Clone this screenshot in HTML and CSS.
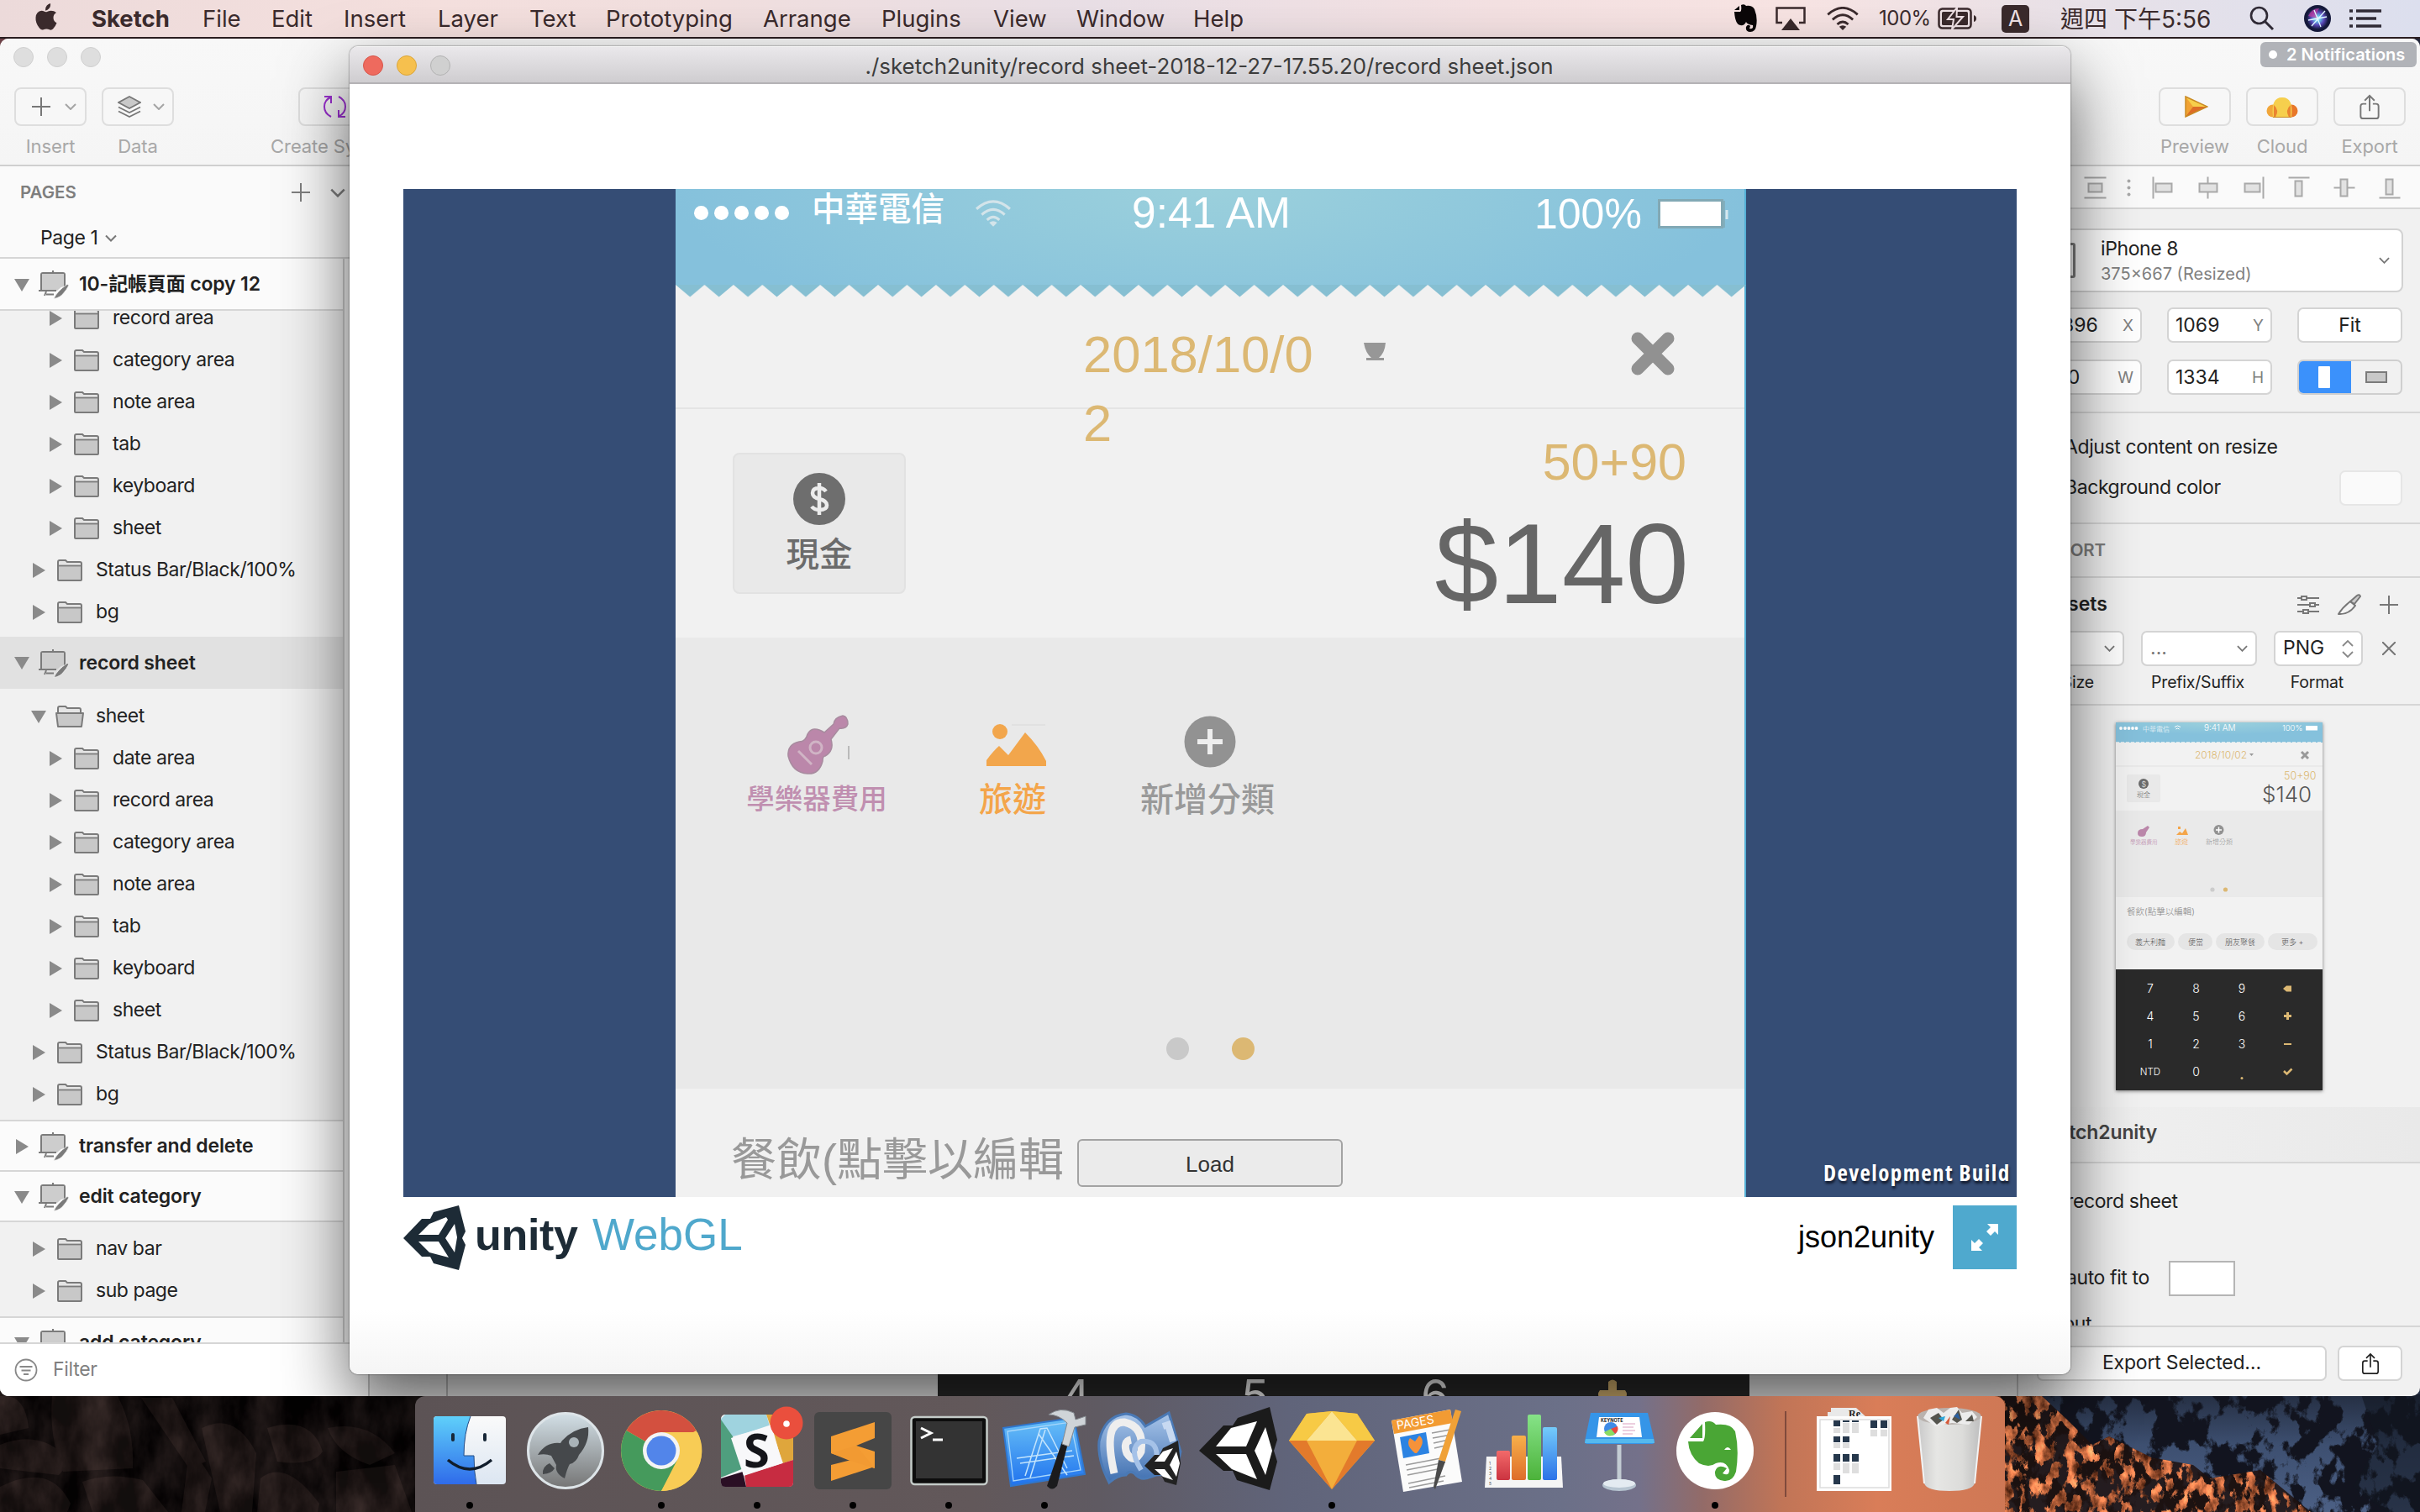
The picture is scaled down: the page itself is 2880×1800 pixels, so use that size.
FILE: index.html
```html
<!DOCTYPE html>
<html lang="zh-Hant">
<head>
<meta charset="utf-8">
<title>Sketch</title>
<link rel="stylesheet" href="styles.css">
</head>
<body>
<svg class="defs" width="0" height="0" aria-hidden="true">
  <defs>
    <symbol id="folder" viewBox="0 0 30 26"><path d="M1 24V3q0-2 2-2h7l2 2h15q2 0 2 2v19q0 1-1 1H2q-1 0-1-1z" fill="#e4e4e4" stroke="#7b7b7b" stroke-width="2"/><path d="M2 7.500H28V24H2z" fill="#c8c8c8"/><path d="M1 7.500H29" stroke="#7b7b7b" stroke-width="1.800"/></symbol>
    <symbol id="folder-open" viewBox="0 0 34 26"><path d="M3 10V3q0-2 2-2h7l2 2h14q2 0 2 2v5" fill="#e4e4e4" stroke="#7b7b7b" stroke-width="2"/><path d="M1 9H33L31 25H3z" fill="#c8c8c8" stroke="#7b7b7b" stroke-width="2" stroke-linejoin="round"/></symbol>
    <symbol id="artboard" viewBox="0 0 36 34"><path d="M17 0v3M3 24V5q0-2 2-2h24q2 0 2 2v14" fill="#cdcdcd" stroke="#7b7b7b" stroke-width="2"/><path d="M4 4H30V17L22 24H4z" fill="#cdcdcd"/><path d="M0 24H21M9 25l-2 5M9 28.500H18" stroke="#7b7b7b" stroke-width="2" fill="none"/><path d="M18 33.500q4-9 16-17l2 1q-3 6-6 9q-4 6-12 7z" fill="#7b7b7b" stroke="#f4f4f4" stroke-width=".8"/></symbol>
    <symbol id="right" viewBox="0 0 15 18"><path d="M0 0L15 9L0 18z" fill="#8a8a8a"/></symbol>
    <symbol id="down" viewBox="0 0 18 15"><path d="M0 0H18L9 15z" fill="#8a8a8a"/></symbol>
    <symbol id="chev" viewBox="0 0 14 8"><path d="M1 1L7 7L13 1" fill="none" stroke="currentColor" stroke-width="2"/></symbol>
    <symbol id="plus" viewBox="0 0 22 22"><path d="M11 0V22M0 11H22" stroke="currentColor" stroke-width="2"/></symbol>
    <symbol id="share" viewBox="0 0 24 32"><path d="M12 21V2M6 8L12 2L18 8M8 12H4q-3 0-3 3V27q0 3 3 3H20q3 0 3-3V15q0-3-3-3H16" fill="none" stroke="currentColor" stroke-width="2"/></symbol>
    <symbol id="wifi" viewBox="0 0 42 30"><g fill="none" stroke="currentColor" stroke-width="3"><path d="M2 10Q21-7 40 10"/><path d="M8 16.500Q21 4.500 34 16.500"/><path d="M14 22.500Q21 16 28 22.500"/></g><path d="M21 30l-4.500-4.500Q21 22 25.500 25.500z" fill="currentColor"/></symbol>
    <linearGradient id="gFinder" x2="0" y2="1"><stop stop-color="#5fd0fa"/><stop offset="1" stop-color="#2f6bea"/></linearGradient>
    <linearGradient id="gWhite" x2="0" y2="1"><stop stop-color="#fafafa"/><stop offset="1" stop-color="#dce6f2"/></linearGradient>
    <linearGradient id="gLaunch" x2="0" y2="1"><stop stop-color="#d3e0e7"/><stop offset="1" stop-color="#757575"/></linearGradient>
    <linearGradient id="gXcode" x2="0" y2="1"><stop stop-color="#69c1f7"/><stop offset="1" stop-color="#1f72ee"/></linearGradient>
    <linearGradient id="gMono" x2="0" y2="1"><stop stop-color="#a9c6ea"/><stop offset="1" stop-color="#3f6fb0"/></linearGradient>
    <linearGradient id="gTrash" x2="1" y2="0"><stop stop-color="#c9c9c9"/><stop offset=".3" stop-color="#e6e6e4"/><stop offset=".7" stop-color="#dcdcda"/><stop offset="1" stop-color="#bdbdbd"/></linearGradient>
    <linearGradient id="gRed" x2="0" y2="1"><stop stop-color="#f26a6a"/><stop offset="1" stop-color="#cb3340"/></linearGradient>
    <linearGradient id="gOrange" x2="0" y2="1"><stop stop-color="#f7b04a"/><stop offset="1" stop-color="#de6d2b"/></linearGradient>
    <linearGradient id="gGreen" x2="0" y2="1"><stop stop-color="#86e388"/><stop offset="1" stop-color="#4cb23a"/></linearGradient>
    <linearGradient id="gBlue" x2="0" y2="1"><stop stop-color="#74cbfa"/><stop offset="1" stop-color="#2b72e8"/></linearGradient>
    <radialGradient id="gSiri"><stop stop-color="#fff"/><stop offset=".25" stop-color="#68c9ea"/><stop offset=".6" stop-color="#5a48b8"/><stop offset="1" stop-color="#121a3a"/></radialGradient>
    <radialGradient id="gSky" cx=".5" cy="0" r=".6"><stop stop-color="#9bd0dc"/><stop offset="1" stop-color="#85c1dc"/></radialGradient>
    <pattern id="teeth" width="34.430" height="16" patternUnits="userSpaceOnUse"><path d="M0 0L17.200 14.500L34.430 0z" fill="#86bfd2"/></pattern>
    <filter id="rockDark" x="0" y="0" width="1" height="1" color-interpolation-filters="sRGB"><feTurbulence type="fractalNoise" baseFrequency=".03 .015" numOctaves="5" seed="4"/><feColorMatrix values=".5 0 0 0 -.15  .4 0 0 0 -.13  .38 0 0 0 -.12  0 0 0 0 1"/></filter>
    <filter id="cliff" x="0" y="0" width="1" height="1" color-interpolation-filters="sRGB"><feTurbulence type="fractalNoise" baseFrequency=".035 .025" numOctaves="6" seed="11"/><feColorMatrix values="0 0 0 0 .07  0 0 0 0 .08  0 0 0 0 .12  14 0 0 0 -6.400"/></filter>
    <filter id="glow" x="0" y="0" width="1" height="1" color-interpolation-filters="sRGB"><feTurbulence type="fractalNoise" baseFrequency=".08 .05" numOctaves="6" seed="23"/><feColorMatrix values="1.500 0 0 0 0  .9 0 0 0 -.05  .6 0 0 0 -.06  0 12 0 0 -5.800"/><feComposite in2="SourceGraphic" operator="in"/></filter>
    <linearGradient id="gSnow" x2="0" y2="1"><stop stop-color="#1d2434"/><stop offset=".5" stop-color="#3d4f70"/><stop offset="1" stop-color="#4c6085"/></linearGradient>
  </defs>
</svg>

<div class="desktop">
  <svg class="rocks" width="520" height="160" viewBox="0 0 520 160">
    <rect width="520" height="160" fill="#080606"/>
    <g fill="#261d1b"><path d="M0 22Q30 18 34 60L0 68z"/><path d="M62 22H140Q160 60 158 108L75 112Q58 70 62 22z"/><path d="M0 80Q50 60 84 100L70 116L0 108z"/><path d="M0 130Q60 100 84 150L80 160H0z"/><path d="M98 124Q130 112 170 122L200 160H110z"/><path d="M168 24H205L245 100L225 108z"/><path d="M226 80L252 120L244 160H216z"/><path d="M240 60Q280 40 305 90L300 160H262z"/><path d="M318 60Q370 44 384 88Q372 106 330 100z"/><path d="M310 120Q340 96 380 150L378 160H306z"/><path d="M390 60Q440 50 470 90L440 104Q400 90 390 60z"/><path d="M400 112L470 104L490 160H400z"/></g>
    <rect width="520" height="160" filter="url(#rockDark)" opacity=".5"/>
  </svg>
  <svg class="cliffs" width="520" height="160" viewBox="0 0 520 160">
    <rect width="520" height="160" fill="url(#gSnow)"/>
    <rect width="520" height="160" filter="url(#cliff)"/>
    <path d="M450 20L520 20V160H480L440 130L470 80z" fill="#11151f" opacity=".6"/>
    <path d="M0 20L70 22L100 50L130 80L150 70L200 95L250 104L270 120L330 110L390 160H0z" fill="#1f120f" opacity=".85"/>
    <path d="M0 20L70 22L100 50L130 80L150 70L200 95L250 104L270 120L330 110L390 160H0z" filter="url(#glow)"/>
  </svg>

  <header class="menubar">
    <svg class="apple" width="26" height="32" viewBox="0 0 26 32"><path d="M18 0q.5 4-2 6.500T12 8.500q-.5-3.500 1.800-6Q15.500.5 18 0zM25 11q-3.500 2.200-3.500 6 0 4.500 4 6.300Q24 27.500 21 30.500q-1.500 1.500-3.500 1Q15 30.500 13.300 30.500T9 31.500Q7 32 5 29.500 0 23.500 .5 17 1 9.500 7.500 8.800q1.500 0 3 .8t2.800.6Q16 9 18.500 8.800 22.500 8.800 25 11z" fill="#3a2a2c"/></svg>
    <nav class="menus">
      <b class="m m1">Sketch</b><span class="m m2">File</span><span class="m m3">Edit</span><span class="m m4">Insert</span><span class="m m5">Layer</span><span class="m m6">Text</span><span class="m m7">Prototyping</span><span class="m m8">Arrange</span><span class="m m9">Plugins</span><span class="m m10">View</span><span class="m m11">Window</span><span class="m m12">Help</span>
    </nav>
    <div class="status">
      <svg width="28" height="34" viewBox="0 0 28 34"><path d="M9 1Q13-1 15 2Q22 1 25 6Q29 16 27 26Q26 33 20 33Q14 33 15 27Q17 23 20 26L19 29Q24 30 23 25Q16 24 15 21Q13 26 8 25Q2 24 1 9H8Q10 8 9 1zM7 2V7H1z" fill="#0b0708"/></svg>
      <svg class="s2" width="36" height="28" viewBox="0 0 36 28"><path d="M8 19H1.500V1.500H34.500V19H28" fill="none" stroke="#3a2a2c" stroke-width="2.500"/><path d="M18 14L29 28H7z" fill="#3a2a2c"/></svg>
      <svg class="s3" width="42" height="28"><use href="#wifi"/></svg>
      <span class="pct">100%</span>
      <svg class="s4" width="47" height="26" viewBox="0 0 47 26"><rect x="1.500" y="1.500" width="38" height="23" rx="4" fill="none" stroke="#3a2a2c" stroke-width="2.500"/><rect x="5" y="5" width="31" height="16" rx="1.500" fill="#3a2a2c"/><path d="M43 9q3 1 3 4t-3 4z" fill="#3a2a2c"/><path d="M23 0L12 14H19L17 26L30 11H22.500z" fill="#3a2a2c" stroke="#f0e2e6" stroke-width="2"/></svg>
      <span class="ime">A</span>
      <span class="clock">週四 下午5:56</span>
      <svg class="s5" width="30" height="30" viewBox="0 0 30 30"><circle cx="11.500" cy="11.500" r="9.500" fill="none" stroke="#2f2a35" stroke-width="2.600"/><path d="M18.500 18.500L28 28" stroke="#2f2a35" stroke-width="3"/></svg>
      <svg class="s6" width="32" height="32" viewBox="0 0 32 32"><circle cx="16" cy="16" r="16" fill="#14183a"/><circle cx="16" cy="16" r="13" fill="url(#gSiri)"/><path d="M5 13Q9 4 18 4Q14 9 16 16z" fill="#c23aa0" opacity=".7"/><path d="M5 18L27 14M12 6L20 26M25 7L9 25" stroke="#dff6ff" stroke-width="1.300"/></svg>
      <svg class="s7" width="38" height="22" viewBox="0 0 38 22"><path d="M0 2H4M0 11H4M0 20H4M8 2H38M8 11H32M8 20H38" stroke="#2f2a35" stroke-width="3.400"/></svg>
    </div>
  </header>

  <section class="sketch">
    <div class="toolbar">
      <div class="lights grey"><i></i><i></i><i></i></div>
      <div class="tools">
        <div class="tool t-insert"><div class="btn"><svg width="22" height="22"><use href="#plus"/></svg><svg class="lite" width="14" height="8"><use href="#chev"/></svg></div><span>Insert</span></div>
        <div class="tool t-data"><div class="btn"><svg width="28" height="26" viewBox="0 0 28 26"><path d="M1 13.500L14 20L27 13.500M1 18.500L14 25L27 18.500" fill="none" stroke="#777" stroke-width="1.800"/><path d="M14 1L27 8L14 15L1 8z" fill="#c9c9c9" stroke="#777" stroke-width="1.800"/></svg><svg class="lite" width="14" height="8"><use href="#chev"/></svg></div><span>Data</span></div>
        <div class="tool t-create"><div class="btn"><svg width="27" height="26" viewBox="0 0 27 26"><path d="M1 1H9V9M9 1.500Q1 5 1 13T9 25M26 25H18V17M18 24.500Q26 21 26 13T18 1" fill="none" stroke="#9b30d0" stroke-width="2"/></svg></div><span>Create Symbol</span></div>
        <div class="tool t-right first"><div class="btn"><svg width="28" height="26" viewBox="0 0 28 26"><path d="M1 1L27 13L1 25z" fill="#f1a233"/><path d="M1 1L27 13L10 13z" fill="#f7cf4a"/><path d="M1 25L27 13H10z" fill="#dd6c26"/><path d="M1 1L27 13L1 25z" fill="none" stroke="#c98a23" stroke-width="1.500"/></svg></div><span>Preview</span></div>
        <div class="tool t-right"><div class="btn"><svg width="38" height="25" viewBox="0 0 38 25"><circle cx="8" cy="17" r="7.500" fill="#f1a63a"/><circle cx="30" cy="17" r="7.500" fill="#e8772a"/><path d="M8 24.500Q5 1 19 1T30 24.500z" fill="#f6cf4d"/><path d="M9 10Q16 16 11 24.500H9zM29 10Q22 16 27 24.500H29z" fill="#ea8430"/><path d="M8 24.500H30" stroke="#c98a23"/></svg></div><span>Cloud</span></div>
        <div class="tool t-right"><div class="btn"><svg class="dim" width="24" height="31"><use href="#share"/></svg></div><span>Export</span></div>
      </div>
      <div class="badge"><i></i>2 Notifications</div>
    </div>

    <div class="body">
      <aside class="layers">
        <div class="pages"><span>PAGES</span><svg class="p-plus" width="22" height="22"><use href="#plus"/></svg><svg class="p-chev" width="18" height="11"><use href="#chev"/></svg></div>
        <div class="page">Page 1<svg width="14" height="9"><use href="#chev"/></svg></div>
        <div class="tree">
          <div class="row art a1"><svg class="dn"><use href="#down"/></svg><svg class="ab"><use href="#artboard"/></svg>10-記帳頁面 copy 12</div>
          <div class="clip">
            <div class="row l3"><svg class="rt"><use href="#right"/></svg><svg class="fd"><use href="#folder"/></svg>record area</div>
            <div class="row l3"><svg class="rt"><use href="#right"/></svg><svg class="fd"><use href="#folder"/></svg>category area</div>
            <div class="row l3"><svg class="rt"><use href="#right"/></svg><svg class="fd"><use href="#folder"/></svg>note area</div>
            <div class="row l3"><svg class="rt"><use href="#right"/></svg><svg class="fd"><use href="#folder"/></svg>tab</div>
            <div class="row l3"><svg class="rt"><use href="#right"/></svg><svg class="fd"><use href="#folder"/></svg>keyboard</div>
            <div class="row l3"><svg class="rt"><use href="#right"/></svg><svg class="fd"><use href="#folder"/></svg>sheet</div>
            <div class="row l2"><svg class="rt"><use href="#right"/></svg><svg class="fd"><use href="#folder"/></svg>Status Bar/Black/100%</div>
            <div class="row l2"><svg class="rt"><use href="#right"/></svg><svg class="fd"><use href="#folder"/></svg>bg</div>
          </div>
          <div class="row art selected"><svg class="dn"><use href="#down"/></svg><svg class="ab"><use href="#artboard"/></svg>record sheet</div>
          <div class="group g2">
            <div class="row l2"><svg class="dn"><use href="#down"/></svg><svg class="fo"><use href="#folder-open"/></svg>sheet</div>
            <div class="row l3"><svg class="rt"><use href="#right"/></svg><svg class="fd"><use href="#folder"/></svg>date area</div>
            <div class="row l3"><svg class="rt"><use href="#right"/></svg><svg class="fd"><use href="#folder"/></svg>record area</div>
            <div class="row l3"><svg class="rt"><use href="#right"/></svg><svg class="fd"><use href="#folder"/></svg>category area</div>
            <div class="row l3"><svg class="rt"><use href="#right"/></svg><svg class="fd"><use href="#folder"/></svg>note area</div>
            <div class="row l3"><svg class="rt"><use href="#right"/></svg><svg class="fd"><use href="#folder"/></svg>tab</div>
            <div class="row l3"><svg class="rt"><use href="#right"/></svg><svg class="fd"><use href="#folder"/></svg>keyboard</div>
            <div class="row l3"><svg class="rt"><use href="#right"/></svg><svg class="fd"><use href="#folder"/></svg>sheet</div>
            <div class="row l2"><svg class="rt"><use href="#right"/></svg><svg class="fd"><use href="#folder"/></svg>Status Bar/Black/100%</div>
            <div class="row l2"><svg class="rt"><use href="#right"/></svg><svg class="fd"><use href="#folder"/></svg>bg</div>
          </div>
          <div class="row art lined"><svg class="rt"><use href="#right"/></svg><svg class="ab"><use href="#artboard"/></svg>transfer and delete</div>
          <div class="row art lined"><svg class="dn"><use href="#down"/></svg><svg class="ab"><use href="#artboard"/></svg>edit category</div>
          <div class="group g3">
            <div class="row l2"><svg class="rt"><use href="#right"/></svg><svg class="fd"><use href="#folder"/></svg>nav bar</div>
            <div class="row l2"><svg class="rt"><use href="#right"/></svg><svg class="fd"><use href="#folder"/></svg>sub page</div>
          </div>
          <div class="row art lined last"><svg class="dn"><use href="#down"/></svg><svg class="ab"><use href="#artboard"/></svg>add category</div>
        </div>
        <div class="filter"><svg width="28" height="28" viewBox="0 0 28 28"><circle cx="14" cy="14" r="12.500" fill="none" stroke="#888" stroke-width="1.800"/><path d="M6.500 10H21.500M8.500 14.500H19.500M11 19H17" stroke="#888" stroke-width="1.800"/></svg>Filter</div>
      </aside>

      <main class="canvas">
        <div class="board"><span class="k4">4</span><span class="k5">5</span><span class="k6">6</span><svg width="36" height="36" viewBox="0 0 36 36"><path d="M13 3q5-5 10 0V13H33q4 5 0 10H23V33q-5 4-10 0V23H3q-4-5 0-10H13z" fill="#dcb873"/></svg></div>
      </main>

      <aside class="inspector">
        <div class="align">
          <svg width="479" height="50" viewBox="2401.500 197.500 479 50"><g fill="#e2e2e2" stroke="#a9a9a9" stroke-width="2"><path d="M2480 211H2506M2480 235H2506"/><rect x="2485" y="218" width="16" height="10"/><path d="M2562 210V236"/><rect x="2565" y="218" width="19" height="10"/><path d="M2627 210V236"/><rect x="2617" y="218" width="21" height="10"/><path d="M2693 210V236"/><rect x="2671" y="218" width="18" height="10"/><path d="M2723 211H2748"/><rect x="2731" y="215" width="8" height="18"/><path d="M2777 223H2802"/><rect x="2785" y="213" width="8" height="20"/><path d="M2831 235H2856"/><rect x="2839" y="213" width="8" height="18"/></g><g fill="#aaa"><circle cx="2533" cy="215" r="2"/><circle cx="2533" cy="223" r="2"/><circle cx="2533" cy="231" r="2"/></g></svg>
        </div>
        <div class="geometry">
          <div class="select"><i class="device"></i><div><p>iPhone 8</p><small>375×667 (Resized)</small></div><svg width="13" height="8"><use href="#chev"/></svg></div>
          <div class="fields"><div class="field wide">-1896<em>X</em></div><div class="field">1069<em>Y</em></div><div class="field fit">Fit</div></div>
          <div class="fields r2"><div class="field wide">750<em>W</em></div><div class="field">1334<em>H</em></div><div class="seg"><b><i></i></b><span><i></i></span></div></div>
        </div>
        <div class="options"><div>Adjust content on resize</div><div>Background color<i class="swatch"></i></div></div>
        <div class="heading">EXPORT</div>
        <div class="presets">
          <div class="p-head"><b>Presets</b>
            <svg width="26" height="24" viewBox="0 0 26 24"><g fill="#f1f1f1" stroke="#777" stroke-width="2"><path d="M0 4H26M0 12H26M0 20H26"/><rect x="5" y="2" width="6" height="4"/><rect x="15" y="10" width="6" height="4"/><rect x="7" y="18" width="6" height="4"/></g></svg>
            <svg width="28" height="26" viewBox="0 0 28 26"><path d="M1 24Q6 16 15 9L21 14Q13 25 1 24z" fill="#f4f4f4" stroke="#777" stroke-width="2" stroke-linejoin="round"/><path d="M15 9L23 2q3-2 4 1L20 12z" fill="#ccc" stroke="#777" stroke-width="2" stroke-linejoin="round"/></svg>
            <svg width="22" height="22"><use href="#plus"/></svg></div>
          <div class="p-row"><div class="box b1"><svg width="13" height="8"><use href="#chev"/></svg></div><div class="box b2"><span>...</span><svg width="13" height="8"><use href="#chev"/></svg></div><div class="box b3">PNG<svg width="14" height="21" viewBox="0 0 14 21"><path d="M1 7L7 1L13 7M1 14L7 20L13 14" fill="none" stroke="#888" stroke-width="1.800"/></svg></div><svg width="16" height="16" viewBox="0 0 16 16"><path d="M0 0L16 16M16 0L0 16" stroke="#777" stroke-width="2"/></svg></div>
          <div class="p-labels"><span class="c1">Size</span><span class="c2">Prefix/Suffix</span><span class="c3">Format</span></div>
        </div>
        <div class="preview">
          <svg class="thumb" width="246" height="438" viewBox="0 0 246 438">
            <rect width="246" height="438" fill="#f2f2f2"/><rect width="246" height="24" fill="url(#gSky)"/>
            <path d="M0 24.500H246" stroke="#f2f2f2" stroke-width="2.500" stroke-dasharray="4 2"/>
            <g fill="#fff" font-size="10"><circle cx="6" cy="7" r="1.900"/><circle cx="11" cy="7" r="1.900"/><circle cx="15.500" cy="7" r="1.900"/><circle cx="20" cy="7" r="1.900"/><circle cx="24.500" cy="7" r="1.900"/><text x="32" y="10.500" font-size="8">中華電信</text><text x="105" y="10">9:41 AM</text><text x="198" y="10" font-size="9.500">100%</text><rect x="226" y="4" width="14" height="5.500"/></g>
            <path d="M70 5.500q3.500-3 7 0M71.500 8q2-2 4 0" stroke="#fff" fill="none"/>
            <text x="94" y="43" font-size="12" fill="#dcb873">2018/10/02</text><path d="M159 37h5l-2.500 3z" fill="#999"/>
            <path d="M221 35l8 8M229 35l-8 8" stroke="#999" stroke-width="3"/><path d="M0 52H246" stroke="#e2e2e2"/>
            <rect x="13" y="62" width="40" height="33" rx="2" fill="#e9e9e9"/><circle cx="33" cy="73" r="6" fill="#6b6b6b"/><text x="30.500" y="76.500" font-size="9" fill="#eee">$</text><text x="25" y="89" font-size="8" fill="#666">現金</text>
            <text x="200" y="68" font-size="12.500" fill="#dcb873">50+90</text><text x="174" y="95" font-size="26" fill="#555">$140</text>
            <rect y="105" width="246" height="103" fill="#eaeaea"/>
            <path d="M26 132q0-5 6-5l6-4 2 2-4 6q0 5-5 5t-5-4z" fill="#bb87aa"/><text x="17" y="145" font-size="6.500" fill="#bb87aa">學樂器費用</text>
            <path d="M72 134l4-4 3 2 4-6 3 8zM74 124h3v3h-3z" fill="#f4a54a"/><text x="70" y="145" font-size="8" fill="#f4a54a">旅遊</text>
            <circle cx="122.500" cy="128" r="6" fill="#929292"/><path d="M119 128h7M122.500 124.500v7" stroke="#fff" stroke-width="1.500"/><text x="107" y="145" font-size="8" fill="#929292">新增分類</text>
            <circle cx="115" cy="199" r="2.600" fill="#ccc"/><circle cx="130.500" cy="199" r="2.600" fill="#dcb873"/>
            <text x="13" y="229" font-size="10.500" fill="#888">餐飲(點擊以編輯)</text>
            <g fill="#e5e5e5"><rect x="13" y="251" width="57" height="20" rx="10"/><rect x="74" y="251" width="41" height="20" rx="10"/><rect x="119" y="251" width="58" height="20" rx="10"/><rect x="181" y="251" width="59" height="20" rx="10"/></g>
            <g fill="#555" font-size="9"><text x="23" y="264.500">義大利麵</text><text x="86" y="264.500">便當</text><text x="130" y="264.500">朋友聚餐</text><text x="197" y="264.500">更多 +</text></g>
            <rect y="294" width="246" height="144" fill="#2a2a2a"/>
            <g fill="#fff" font-size="14" text-anchor="middle"><text x="41" y="322">7</text><text x="95.500" y="322">8</text><text x="150" y="322">9</text><text x="41" y="355">4</text><text x="95.500" y="355">5</text><text x="150" y="355">6</text><text x="41" y="388">1</text><text x="95.500" y="388">2</text><text x="150" y="388">3</text><text x="41" y="420" font-size="11.500">NTD</text><text x="95.500" y="421">0</text></g>
            <g fill="#dcb873"><path d="M199 317l4-3.500h6v7h-6z"/><path d="M203 345h3v3h3v3h-3v3h-3v-3h-3v-3h3z"/><rect x="200" y="382" width="9" height="2"/><circle cx="150" cy="423.500" r="1.500"/></g><path d="M200 415l3.500 3.500 6-6" stroke="#dcb873" stroke-width="2.500" fill="none"/>
          </svg>
        </div>
        <div class="plugin">sketch2unity</div>
        <div class="plug-body"><p class="q1">record sheet</p><p class="q2">auto fit to<i></i></p><p class="q3">layout</p></div>
        <div class="export"><div class="ebtn">Export Selected…</div><div class="ebtn sh"><svg width="20" height="27"><use href="#share"/></svg></div></div>
      </aside>
    </div>
  </section>

  <section class="window">
    <div class="titlebar"><div class="lights"><i class="r"></i><i class="y"></i><i></i></div><h1>./sketch2unity/record sheet-2018-12-27-17.55.20/record sheet.json</h1></div>
    <div class="web">
      <div class="unity">
        <div class="phone">
          <div class="p-status"><div class="sig"><i></i><i></i><i></i><i></i><i></i></div><span class="carrier">中華電信</span><svg class="pw" width="44" height="32"><use href="#wifi"/></svg><span class="time">9:41 AM</span><span class="full">100%</span><svg class="batt" width="84" height="36" viewBox="0 0 84 36"><rect x="1.500" y="1.500" width="75" height="32" fill="#fff" stroke="#82a9b5" stroke-width="3"/><path d="M82 13V24" stroke="#d6e8ee" stroke-width="3"/><path d="M79 2V34" stroke="#7fa8b6" stroke-width="1.500"/></svg></div>
          <svg class="zig" width="1274" height="16"><rect width="1274" height="16" fill="url(#teeth)"/></svg>
          <div class="p-date"><span>2018/10/02</span><svg class="tri" width="26" height="22" viewBox="0 0 26 22"><path d="M0 0H26Q25 12 18 18H24V21H3V18H9Q2 12 0 0z" fill="#979797"/></svg><svg class="x" width="54" height="54" viewBox="0 0 54 54"><path d="M9 9L45 45M45 9L9 45" stroke="#919191" stroke-width="15" stroke-linecap="round"/></svg></div>
          <div class="p-record"><div class="cash"><svg width="64" height="64" viewBox="0 0 64 64"><circle cx="32" cy="32" r="31" fill="#6e6e6e"/><path d="M40 23Q37 19 32 19Q24 19 24 25Q24 30 32 32Q41 34 41 39.500Q41 45 32 45Q26 45 23 41M32 13V51" fill="none" stroke="#ececec" stroke-width="4.500"/></svg>現金</div><div class="sum"><span>50+90</span><strong>$140</strong></div></div>
          <div class="p-cats">
            <div class="cats">
              <div class="cat guitar"><svg width="76" height="74" viewBox="0 0 76 74"><path d="M68 2Q74 3 74 12Q72 18 64 17L54 30Q58 44 47 50Q44 50 44 56Q40 72 26 71Q8 70 3 50Q2 36 16 33Q24 33 26 24Q32 13 46 22L57 12Q58 4 68 2z" fill="#bb87aa" stroke="#a88b9f" stroke-width="1.500"/><circle cx="36" cy="40" r="7" fill="none" stroke="#d0b4c5" stroke-width="3"/><path d="M15 44L31 60" stroke="#d0b4c5" stroke-width="3"/><path d="M75 38V54" stroke="#aaa" stroke-width="1.500"/></svg>學樂器費用</div>
              <div class="cat travel"><svg width="72" height="52" viewBox="0 0 72 52"><circle cx="16" cy="9" r="9" fill="#f2a64c"/><path d="M0 50V43Q8 32 15 26L26 37L46 10Q62 26 71 44V50z" fill="#f2a64c"/><path d="M30 1H70" stroke="#dedede" stroke-width="1.500"/></svg>旅遊</div>
              <div class="cat add"><svg width="62" height="62" viewBox="0 0 62 62"><circle cx="31" cy="31" r="30.500" fill="#929292"/><path d="M31 16V46M16 31H46" stroke="#eee" stroke-width="6"/></svg>新增分類</div>
            </div>
            <div class="dots"><i></i><i></i></div>
          </div>
          <div class="p-note"><span>餐飲(點擊以編輯</span><button>Load</button></div>
        </div>
        <div class="dev"><span>Development Build</span></div>
      </div>
      <div class="foot">
        <svg width="76" height="77" viewBox="0 0 76 77"><path d="M66 0L74 31L70 39L74 47L66 77L36 69L32 61H22L0 39L22 16H32L36 8z" fill="#1d2b36"/><path d="M53 17L42 35H18L31 22L51 14zM18 43H42L54 62L31 56zM61 22L64 38L61 56L50 39z" fill="#fff"/></svg>
        <b>unity</b><span class="gl">WebGL</span><span class="name">json2unity</span>
        <div class="fs"><svg width="34" height="34" viewBox="0 0 34 34"><path d="M20 1H33V14L29 10L24 15L19 10L24 5zM14 33H1V20L5 24L10 19L15 24L10 29z" fill="#fff"/></svg></div>
      </div>
    </div>
  </section>

  <footer class="dock">
    <svg class="app" viewBox="0 0 114 138"><rect x="14" y="24" width="86" height="81" rx="4" fill="url(#gWhite)"/><path d="M58 24H18q-4 0-4 4V101q0 4 4 4H65Q62 90 62 71H50Q50 44 58 24z" fill="url(#gFinder)"/><path d="M58 24Q50 44 50 71H62Q62 90 65 105" fill="none" stroke="#234c86" stroke-width="1"/><path d="M37 46V52M75 46V52" stroke="#182838" stroke-width="4" stroke-linecap="round"/><path d="M31 76Q57 98 83 76" fill="none" stroke="#111d2c" stroke-width="3.500"/><circle cx="57" cy="130" r="4"/></svg>
    <svg class="app" viewBox="0 0 114 138"><circle cx="57" cy="65" r="44.500" fill="url(#gLaunch)" stroke="#dde4e8" stroke-width="3"/><path d="M84 37Q66 39 53 53L51 56Q34 54 24 70Q33 68 40 71L46 82Q44 92 56 98Q59 86 62 81Q70 79 73 70Q86 55 84 37z" fill="#45484b"/><circle cx="67" cy="55" r="6" fill="#a9b3b8"/><path d="M38 80Q29 84 30 93Q41 92 44 86z" fill="#45484b"/></svg>
    <svg class="app" viewBox="0 0 114 138"><circle cx="57" cy="65" r="48" fill="#f8cc55"/><path d="M57 65L15.500 41A48 48 0 0 1 98.500 41z" fill="#d3503f"/><path d="M15.500 41A48 48 0 0 0 57 113L78 77L57 65z" fill="#459a5c"/><path d="M57 43H100A48 48 0 0 1 57 113L78 72z" fill="#f8cc55"/><circle cx="57" cy="65" r="22" fill="#f4f4f4"/><circle cx="57" cy="65" r="17.500" fill="#5285ea"/><circle cx="57" cy="130" r="4"/></svg>
    <svg class="app" viewBox="0 0 114 138"><rect x="14" y="22" width="86" height="86" rx="5" fill="#f5f5f7"/><path d="M19 22H68L72 36L14 52V27z" fill="#9fd3df"/><path d="M14 28L28 48L41 86L14 97z" fill="#4f9e7e"/><path d="M68 22H95q5 0 5 5V76L88 80z" fill="#dfa63c"/><path d="M42 94L100 76V103q0 5-5 5H44z" fill="#c72c41"/><path d="M14 98L40 90L44 108H19q-5 0-5-5z" fill="#2a0f24"/><path d="M26 50L74 34L87 80L41 95z" fill="#f8f8fa"/><text x="41" y="85" class="slack">S</text><circle cx="92" cy="32" r="19.500" fill="#ea4f3d"/><circle cx="92" cy="33" r="3.800" fill="#fff"/><circle cx="57" cy="130" r="4"/></svg>
    <svg class="app" viewBox="0 0 114 138"><rect x="11" y="19" width="92" height="92" rx="6" fill="#464646"/><path d="M83 31L31 48V68L83 86V66L61 59L83 50z" fill="#f49d34"/><path d="M31 101L83 84V66L51 77L31 82z" fill="#f49d34"/><path d="M31 68L51 76L83 86L61 59z" fill="#f29a32"/><circle cx="57" cy="130" r="4"/></svg>
    <svg class="app" viewBox="0 0 114 138"><rect x="12.500" y="25" width="90" height="80" rx="4" fill="#0d0d0d" stroke="#c4cbc8" stroke-width="2.500"/><rect x="18" y="30" width="79" height="68" fill="#333"/><path d="M24 38L36 44L24 50" stroke="#fff" stroke-width="3" fill="none"/><path d="M38 52H50" stroke="#fff" stroke-width="3"/><circle cx="57" cy="130" r="4"/></svg>
    <svg class="app" viewBox="0 0 114 138"><path d="M8 38L92 26L105 93L17 107z" fill="url(#gXcode)" stroke="#2f77cf" stroke-width="2"/><path d="M13 42L88 31L100 88L20 101z" fill="none" stroke="#a7d6fa" stroke-width="1.300"/><path d="M34 95L52 39L60 38L84 86M24 74L90 65M28 80L92 71M50 45L84 94M40 97L58 40" stroke="#c3e4fc" fill="none" stroke-width="1.500"/><path d="M78 54L85 56L72 107Q66 114 60 107z" fill="#1b1b1d"/><path d="M62 22Q76 12 92 20L94 28L106 24V34L93 37L86 60L78 57L84 32Q74 22 62 22z" fill="#cfd4d8" stroke="#83898f" stroke-width="1"/><circle cx="57" cy="130" r="4"/></svg>
    <svg class="app" viewBox="0 0 114 138"><path d="M20 103Q6 76 8 54Q14 24 40 21Q54 22 63 36L91 20L105 66L98 98Q84 90 70 96Q58 102 50 92Q44 88 40 94Q30 94 20 103Z" fill="url(#gMono)" stroke="#4a79b5" stroke-width="3"/><path d="M26 92Q12 30 38 31Q62 36 58 66Q50 82 41 68Q36 54 46 52" fill="none" stroke="#eee" stroke-width="9"/><path d="M58 88Q42 62 58 54Q80 52 76 78" fill="none" stroke="#a5c2e8" stroke-width="6"/><path d="M84 36L90 34L96 54" fill="none" stroke="#c7d9f1" stroke-width="8"/><path d="M102 53L84 62L80 70H74L62 83L74 94H82L86 102L100 106L105 80z" fill="#222"/><path d="M96 62L86 78H74L84 66zM74 87H86L96 100L84 96zM100 66L104 80L100 96L92 82z" fill="#fff"/></svg>
    <svg class="app" viewBox="0 0 114 138"><path d="M97 13L106 52L102 65L106 78L97 112L58 100L53 89H42L13 65L42 35H53L59 26z" fill="#1b1b1b"/><path d="M82 30L69 60H33L51 38zM33 69H69L82 99L52 87zM92 37L100 65L92 94L79 65z" fill="#fff"/></svg>
    <svg class="app" viewBox="0 0 114 138"><path d="M6 53L27 21L57 18L87 21L108 53L57 111z" fill="#f3ae3b"/><path d="M57 18L27 53H87z" fill="#fbe492"/><path d="M27 21L57 18L27 53H6z" fill="#f7ca45"/><path d="M87 21L57 18L87 53H108z" fill="#f7ca45"/><path d="M6 53H27L57 111z" fill="#e37a2b"/><path d="M108 53H87L57 111z" fill="#e37a2b"/><circle cx="57" cy="130" r="4"/></svg>
    <svg class="app" viewBox="0 0 114 138"><path d="M14 29L84 16L98 102L28 114z" fill="#fbfbfb"/><path d="M14 29L84 16L87 32L17 45z" fill="#f29b33"/><text x="21" y="40" class="pages-t" transform="rotate(-10 21 40)">PAGES</text><path d="M24 49L55 43L59 68L28 74z" fill="#2c83e2"/><path d="M42 68Q30 58 36 50L42 54L47 47Q56 54 44 68z" fill="#f5923a"/><path d="M62 44L84 40M63 50L85 46M64 56L82 52M65 62L82 58M31 82L78 73M32 88L78 79M33 94L74 86M34 104L78 95M35 109L76 101" stroke="#9b9b9b" stroke-width="1.500"/><path d="M90 16L97 18L78 78L70 76z" fill="#f0a137"/><path d="M70 76L78 78L66 111L64 108z" fill="#4b4b4b"/></svg>
    <svg class="app" viewBox="0 0 114 138"><path d="M13 72H102L104 109H11z" fill="#f5f5f5"/><g class="tiny"><text x="16" y="82">1</text><text x="16" y="88">2</text><text x="16" y="94">3</text><text x="16" y="100">4</text><text x="16" y="106">5</text></g><rect x="25" y="65" width="16" height="35" rx="2" fill="url(#gRed)"/><rect x="43" y="47" width="17" height="53" rx="2" fill="url(#gOrange)"/><rect x="62" y="22" width="16" height="78" rx="2" fill="url(#gGreen)"/><rect x="80" y="37" width="17" height="63" rx="2" fill="url(#gBlue)"/></svg>
    <svg class="app" viewBox="0 0 114 138"><path d="M23 20H91L99 54Q99 57 96 57H19Q16 57 16 54z" fill="#3595e8"/><path d="M17 51H98L99 56H16z" fill="#55b9ee"/><path d="M33 25H81L84 49H30z" fill="#fff"/><text x="35" y="30.500" class="key">KEYNOTE</text><circle cx="47" cy="39" r="8" fill="#3f8be6"/><path d="M47 39L55 36A8 8 0 0 1 52 45z" fill="#e9483f"/><path d="M47 39L52 45A8 8 0 0 1 39 43z" fill="#8cdc62"/><path d="M61 33H76M61 37H74M61 41H76M61 45H73" stroke="#d9a0c0" stroke-width="1.200"/><path d="M57 58V104" stroke="#c3ccd3" stroke-width="5"/><ellipse cx="57" cy="106" rx="20" ry="7" fill="#b7c5d1"/><ellipse cx="57" cy="104" rx="19" ry="5" fill="#e4ebf1"/></svg>
    <svg class="app" viewBox="0 0 114 138"><circle cx="57" cy="65" r="46" fill="#fff"/><path d="M45 31Q53 28 58 34Q76 32 81 42Q86 64 82 90Q78 102 68 101Q56 100 57 90Q60 80 71 86L66 92Q74 96 74 88Q70 76 58 80Q50 86 38 80Q26 70 25 54H43Q46 50 45 31zM42 33V50H27z" fill="#4aa635"/><path d="M68 64Q72 58 76 64z" fill="#fff"/><circle cx="57" cy="130" r="4"/></svg>
    <i class="sep"></i>
    <svg class="app" viewBox="0 0 114 138"><path d="M30 14H60L72 25V40H26V19H30z" fill="#e9e9e9"/><text x="51" y="25" class="re">Re</text><path d="M13 24H102V113H13z" fill="#fdfdfd"/><path d="M17 28H99V109H17z" fill="#fff" stroke="#ddd" stroke-width="1.500"/><g fill="#26384c"><path d="M33 29h8v7h-8zM44 29h8v2h-8zM55 29h8v2h-8zM77 29h8v9h-8zM89 29h8v9h-8zM33 48h8v7h-8zM44 48h8v7h-8zM33 69h8v9h-8zM44 69h8v9h-8zM55 69h8v9h-8zM33 94h8v11h-8z"/></g><g fill="#dedede"><path d="M33 38h8v6h-8zM44 32h8v12h-8zM55 32h8v12h-8zM77 40h8v8h-8zM89 40h8v8h-8zM33 56h8v6h-8zM44 56h8v6h-8zM33 80h8v8h-8zM44 80h8v12h-8zM55 80h8v12h-8z"/></g></svg>
    <svg class="app" viewBox="0 0 114 138"><path d="M19 24H95L87 104Q84 113 57 113T27 104z" fill="url(#gTrash)"/><ellipse cx="57" cy="24" rx="38" ry="10" fill="#b9b2ae"/><path d="M26 26L32 16L42 14L50 20L58 14L66 13L72 20L84 18L90 25L80 34L60 32L40 36z" fill="#ececec"/><path d="M34 26L44 20L50 28L42 34zM60 28L68 16L72 28L66 32zM76 30L84 22L86 30z" fill="#55554f"/><path d="M44 26l8-2-2 6z" fill="#30a7d9"/><path d="M62 24l5-4 3 8z" fill="#2a5fa0"/><path d="M52 32l6-8-2 10z" fill="#d45a3a"/><path d="M19 24L27 104M95 24L87 104" stroke="#f3f3f3" stroke-width="2"/></svg>
  </footer>
</div>
</body>
</html>
```
FILE: styles.css
```css
* { box-sizing: border-box; }
body { margin: 0; }
p, h1 { margin: 0; }
svg { display: block; flex: none; }
i { display: block; flex: none; }
.defs { position: absolute; }

.desktop {
  position: relative;
  width: 2880px;
  height: 1800px;
  overflow: hidden;
  background: linear-gradient(90deg, #6d4248, #2a2024 30%, #3a3034 70%, #23263a);
  font: 24px/1.2 Inter, "Noto Sans CJK TC", sans-serif;
  color: #222;
}
.rocks { position: absolute; left: 0; bottom: 0; }
.cliffs { position: absolute; right: 0; bottom: 0; }

/* menu bar */
.menubar {
  position: relative;
  height: 46px;
  display: flex;
  align-items: center;
  padding: 0 46px 0 42px;
  background: linear-gradient(90deg, #ecdada, #f5e0de 18%, #f1dfdf 30%, #e9dfe6 45%, #f4e1e2 62%, #f8e4e3 74%, #e6e1e9 88%, #dcdfee);
  border-bottom: 2px solid #2a1d20;
  color: #3a2a2c;
  font-size: 27.500px;
}
.apple { margin: -4px 41px 0 0; }
.menus { display: flex; padding-top: 1px; }
.m { white-space: nowrap; }
.m1 { width: 132px; } .m2 { width: 82px; } .m3 { width: 86px; } .m4 { width: 112px; }
.m5 { width: 109px; } .m6 { width: 91px; } .m7 { width: 187px; } .m8 { width: 141px; }
.m9 { width: 133px; } .m10 { width: 99px; } .m11 { width: 140px; }
.m12 { margin-left: -1px; }
.status { margin-left: auto; display: flex; align-items: center; }
.s2 { margin-left: 22px; }
.s3 { margin-left: 23px; }
.pct { margin-left: 22px; width: 62px; font-size: 24px; letter-spacing: -.5px; white-space: nowrap; }
.s4 { margin-left: 8px; }
.ime { margin-left: 29px; width: 33px; height: 33px; border-radius: 5px; background: #3a2a2c; color: #f0e2e6; font-size: 25px; display: flex; align-items: center; justify-content: center; }
.clock { margin-left: 37px; width: 184px; white-space: nowrap; font-size: 28px; line-height: 40px; padding-top: 1px; }
.s5 { margin-left: 41px; }
.s6 { margin-left: 35px; }
.s7 { margin-left: 22px; }

/* editor window */
.sketch {
  position: relative;
  height: 1616px;
  border-radius: 10px;
  overflow: hidden;
  background: #f1f1f1;
  display: flex;
  flex-direction: column;
}
.toolbar { position: relative; height: 152px; flex: none; border-bottom: 2px solid #cfcfcf; background: linear-gradient(#f8f8f8, #f5f5f5); }
.lights { display: flex; gap: 16px; }
.lights i { width: 24px; height: 24px; border-radius: 50%; background: #d0d0d0; border: 1px solid #b3b3b3; }
.lights .r { background: #ee6a5e; border-color: #d8564b; }
.lights .y { background: #f6c04e; border-color: #dba63a; }
.lights.grey { padding: 10px 0 0 16px; }
.lights.grey i { background: #dedede; border-color: #cfcfcf; }
.tools { display: flex; padding: 24px 17px 0; }
.tool { display: flex; flex-direction: column; align-items: center; gap: 9px; width: 86px; font-size: 22px; letter-spacing: -.1px; color: #a8a8a8; }
.tool span { white-space: nowrap; line-height: 30px; }
.btn { width: 86px; height: 46px; border: 2px solid #dedede; border-radius: 8px; display: flex; align-items: center; justify-content: center; gap: 17px; color: #777; background: #f7f7f7; }
.lite { color: #a5a5a5; }
.t-insert .btn { padding-left: 8px; }
.t-data { margin-left: 18px; }
.t-data .btn { gap: 14px; padding-left: 7px; }
.t-create { margin-left: 148px; }
.t-right { margin-left: 18px; }
.t-right.first { margin-left: auto; }
.first .btn { padding-left: 3px; }
.badge { position: absolute; right: 4px; top: 4px; width: 186px; height: 30px; border-radius: 6px; background: #b1b3b8; color: #fff; font-size: 20px; font-weight: 600; display: flex; align-items: center; padding-left: 10px; white-space: nowrap; }
.badge i { width: 10px; height: 10px; border-radius: 50%; background: #fff; margin-right: 11px; }

.body { flex: 1; min-height: 0; display: flex; }

/* layer list */
.layers { width: 440px; border-right: 2px solid #c4c4c4; display: flex; flex-direction: column; background: #fafafa; }
.pages { height: 62px; display: flex; align-items: center; padding-left: 24px; font-size: 20.500px; font-weight: 600; color: #7e7e7e; }
.pages span { width: 323px; }
.p-chev { margin-left: 24px; }
.page { height: 48px; padding: 1px 0 0 48px; display: flex; align-items: center; gap: 8px; font-size: 23px; letter-spacing: -.4px; border-bottom: 2px solid #d6d6d6; }
.page svg { color: #777; }
.tree { width: 410px; border-right: 2px solid #cfcfcf; flex: 1; min-height: 0; overflow: hidden; background: #f1f1f1; }
.row { height: 50px; display: flex; align-items: center; white-space: nowrap; font-size: 23px; letter-spacing: -.44px; padding-top: 2px; }
.row .rt { width: 15px; height: 18px; }
.row .dn { width: 18px; height: 15px; }
.row .fd { width: 30px; height: 26px; margin: 0 16px 0 14px; }
.row .fo { width: 34px; height: 26px; margin: 0 14px 0 11px; }
.l3 { padding-left: 59px; }
.l2 { padding-left: 39px; }
.l2:has(.dn) { padding-left: 37px; }
.art { height: 61px; padding-left: 17px; font-weight: 600; letter-spacing: -.15px; background: #fbfbfb; }
.art .ab { width: 36px; height: 34px; margin: 0 12px 0 11px; }
.art .rt { margin: 0 1px 0 2px; }
.a1 { border-bottom: 2px solid #d6d6d6; height: 62px; padding-top: 2px; }
.clip { height: 388px; overflow: hidden; padding-bottom: 5px; display: flex; flex-direction: column; justify-content: flex-end; }
.clip .row { flex: none; }
.selected { height: 62px; background: #e1e1e1; padding-top: 1px; }
.g2 { height: 513px; padding-top: 7px; }
.lined { height: 60px; border-top: 2px solid #d6d6d6; }
.g3 { height: 114px; border-top: 2px solid #d6d6d6; padding-top: 6px; }
.filter { height: 64px; border-top: 2px solid #d6d6d6; background: #fff; display: flex; align-items: center; gap: 18px; padding-left: 17px; color: #808080; font-size: 23px; letter-spacing: -.3px; }

/* canvas behind the floating window */
.canvas { flex: 1; display: flex; flex-direction: column; justify-content: flex-end; background: #f1f1f1 linear-gradient(90deg, transparent 91px, #bbb 91px, #bbb 93px, transparent 93px); }
.board { width: 966px; height: 26px; margin-left: 676px; overflow: hidden; display: flex; background: #2a2a2a; color: #fff; font-size: 54px; line-height: 54px; padding-left: 147px; }
.board span { width: 214px; flex: none; margin-top: -1px; }
.board .k6 { width: 210px; }
.board svg { margin: 6px 0 0 0; }

/* inspector */
.inspector { width: 480px; border-left: 2px solid #c4c4c4; display: flex; flex-direction: column; font-size: 23px; letter-spacing: -.4px; }
.align { height: 51px; background: #fafafa; border-bottom: 2px solid #d6d6d6; }
.geometry { height: 243px; border-bottom: 2px solid #d6d6d6; padding: 23px 20px 0 22px; color: #222; }
.select { height: 76px; background: #fff; border: 2px solid #d2d2d2; border-radius: 8px; display: flex; align-items: center; padding: 0 14px 0 16px; color: #222; }
.select svg { margin-left: auto; color: #777; }
.select small { font-size: 20px; color: #808080; letter-spacing: 0; }
.select p { line-height: 32px; }
.device { width: 28px; height: 42px; border: 3px solid #7b7b7b; border-radius: 3px; margin-right: 30px; }
.fields { display: flex; justify-content: space-between; margin-top: 18px; margin-right: 1px; }
.fields.r2 { margin-top: 20px; }
.field { width: 125px; height: 42px; background: #fff; border: 2px solid #d4d4d4; border-radius: 7px; display: flex; align-items: center; justify-content: space-between; padding: 2px 8px 0; letter-spacing: 0; }
.field em { font-style: normal; font-size: 19px; color: #808080; }
.field.fit { justify-content: center; }
.seg { width: 125px; height: 42px; display: flex; border: 2px solid #cfcfcf; border-radius: 7px; overflow: hidden; }
.seg b { width: 64px; background: #3b91fb; margin: -2px 0 -2px -2px; display: flex; align-items: center; justify-content: center; }
.seg b i { width: 14px; height: 26px; background: #fff; border-radius: 1px; }
.seg span { flex: 1; display: flex; align-items: center; justify-content: center; }
.seg span i { width: 26px; height: 14px; background: #c8c8c8; border: 2px solid #7b7b7b; }
.options { height: 132px; border-bottom: 2px solid #d6d6d6; padding: 17px 21px 0 55px; display: flex; flex-direction: column; }
.options div { height: 48px; display: flex; align-items: center; justify-content: space-between; flex: none; }
.swatch { width: 75px; height: 42px; border: 2px solid #e6e6e6; border-radius: 7px; background: #fafafa; }
.heading { height: 64px; border-bottom: 2px solid #d6d6d6; padding: 0 0 0 22px; display: flex; align-items: center; font-size: 20.500px; font-weight: 600; letter-spacing: -.2px; color: #7e7e7e; }
.presets { height: 152px; border-bottom: 2px solid #d6d6d6; padding: 0 26px 0 22px; }
.p-head { height: 63px; display: flex; align-items: center; gap: 22px; color: #777; }
.p-head b { color: #222; font-weight: 600; margin-right: auto; letter-spacing: 0; }
.p-row { height: 42px; display: flex; align-items: center; color: #777; }
.p-row > svg { margin-left: 23px; }
.box { height: 42px; background: #fff; border: 2px solid #d4d4d4; border-radius: 7px; display: flex; align-items: center; justify-content: space-between; padding: 0 9px; letter-spacing: 0; }
.b1 { width: 104px; justify-content: flex-end; }
.b2 { width: 138px; margin-left: 20px; }
.b3 { width: 106px; margin-left: 20px; color: #222; }
.p-labels { display: flex; height: 40px; align-items: center; font-size: 19.500px; letter-spacing: -.2px; }
.c1 { width: 68px; text-align: right; }
.c2 { width: 179px; text-align: right; }
.c3 { width: 118px; text-align: right; }
.preview { height: 478px; padding: 20px 0 0 116px; }
.thumb { box-shadow: 0 1px 4px rgba(0,0,0,.5); font-family: Inter, "Noto Sans CJK TC", sans-serif; font-size: 10px; font-weight: 300; letter-spacing: 0; }
.plugin { height: 67px; border-bottom: 2px solid #d6d6d6; background: linear-gradient(90deg, #f1f1f1, #e9e9e9); display: flex; align-items: center; padding: 0 0 3px 22px; font-weight: 600; letter-spacing: -.15px; color: #444; }
.plug-body { flex: 1; min-height: 0; overflow: hidden; padding-top: 22px; }
.plug-body p { display: flex; align-items: center; height: 48px; padding-left: 57px; }
.plug-body .q2 { height: 42px; margin-top: 46px; gap: 23px; }
.q2 i { width: 79px; height: 42px; border: 2px solid #b5b5b5; background: #fff; }
.plug-body .q3 { padding-left: 24px; margin-top: 10px; }
.export { height: 84px; border-top: 2px solid #d6d6d6; padding: 22px 21px 0 22px; display: flex; gap: 13px; letter-spacing: -.2px; }
.ebtn { flex: 1; height: 42px; background: #fff; border: 2px solid #d4d4d4; border-radius: 7px; display: flex; align-items: center; justify-content: center; }
.ebtn.sh { flex: none; width: 77px; }

/* floating web window */
.window {
  position: absolute;
  left: 416px;
  top: 55px;
  width: 2048px;
  height: 1581px;
  border-radius: 10px;
  overflow: hidden;
  background: #fff;
  box-shadow: 0 0 2px rgba(0,0,0,.7), 0 36px 80px rgba(0,0,0,.62);
}
.titlebar { height: 45px; display: flex; align-items: center; padding-left: 16px; background: linear-gradient(#eae8eb, #cfcdd0); border-bottom: 2px solid #b4b2b5; border-top: 1px solid #f6f6f6; }
.titlebar .lights { padding-top: 2px; }
.titlebar h1 { flex: 1; text-align: center; font-size: 25.900px; font-weight: 400; color: #3c3c3c; padding: 3px 122px 0 0; white-space: nowrap; }
.web { height: 1536px; padding: 125px 64px 0; background: linear-gradient(#fff 95%, #f5f5f5); font-family: "Liberation Sans", "Noto Sans CJK TC", sans-serif; }
.unity { position: relative; height: 1200px; background: #354d75; padding-left: 324px; overflow: hidden; }
.phone { width: 1274px; height: 1200px; background: #f1f1f1; border-right: 2px solid #55b0d6; display: flex; flex-direction: column; }
.p-status { height: 114px; flex: none; display: flex; align-items: flex-start; background: radial-gradient(ellipse 640px 180px at 50% 0, #9bd0dc, #85c1dc); color: #fff; }
.sig { display: flex; gap: 7px; padding: 20px 0 0 22px; }
.sig i { width: 17px; height: 17px; border-radius: 50%; background: #fff; }
.carrier { margin-left: 27px; width: 160px; font-size: 39.500px; font-weight: 500; line-height: 48px; }
.pw { margin: 13px 0 0 34px; color: #d3e4ea; }
.time { margin: 3px 0 0 143px; font-size: 51.500px; line-height: 50px; width: 198px; white-space: nowrap; }
.full { margin: 5px 0 0 281px; font-size: 50px; line-height: 51px; width: 130px; white-space: nowrap; }
.batt { margin: 12px 0 0 17px; }
.zig { flex: none; }
.p-date { height: 132px; flex: none; display: flex; border-bottom: 2px solid #e4e4e4; color: #dcb873; }
.p-date span { display: block; margin: 26px 0 0 485px; width: 280px; flex: none; font-size: 61.500px; line-height: 82px; word-break: break-all; }
.tri { margin: 53px 0 0 54px; }
.x { margin: 39px 0 0 291px; }
.p-record { height: 272px; flex: none; display: flex; justify-content: space-between; padding: 52px 69px 0 68px; }
.cash { width: 206px; height: 168px; border-radius: 8px; border: 2px solid #e2e2e2; background: #e9e9e9; display: flex; flex-direction: column; align-items: center; padding-top: 21px; font-size: 39.500px; font-weight: 500; line-height: 68px; color: #6b6b6b; }
.sum { display: flex; flex-direction: column; align-items: flex-end; margin-top: -24px; }
.sum span { font-size: 61px; line-height: 70px; color: #dcb873; }
.sum strong { font-size: 136px; font-weight: 400; line-height: 172px; color: #666; margin-right: -3px; }
.p-cats { height: 537px; flex: none; background: #e9e9e9; }
.cats { display: flex; height: 476px; padding-left: 85px; align-items: flex-start; }
.cat { display: flex; flex-direction: column; align-items: center; justify-content: flex-end; height: 220px; font-size: 40px; font-weight: 500; line-height: 54px; white-space: nowrap; }
.guitar { width: 166px; color: #c08fb0; font-size: 33.500px; }
.guitar svg { margin: 0 0 1px 2px; }
.travel { width: 82px; margin-left: 109px; color: #f4a54a; }
.travel svg { margin: 0 0 11px 9px; }
.add { width: 162px; margin-left: 110px; color: #999; }
.add svg { margin: 0 0 11px 6px; }
.dots { display: flex; justify-content: center; gap: 51px; }
.dots i { width: 27px; height: 27px; border-radius: 50%; background: #c9c9c9; }
.dots i + i { background: #dcb873; }
.p-note { flex: 1; display: flex; align-items: flex-start; padding: 60px 0 0 66px; color: #999; }
.p-note span { width: 412px; font-size: 54px; line-height: 50px; white-space: nowrap; flex: none; }
.p-note button { width: 316px; height: 57px; border: 2px solid #a3a3a3; border-radius: 6px; background: #ebebeb; font: 26px "Liberation Sans", sans-serif; color: #333; padding-top: 4px; }
.dev { position: absolute; right: 0; bottom: 10px; width: 230px; color: #fff; font: 700 27px/38px "Open Sans", sans-serif; font-stretch: 75%; text-shadow: 1px 3px 3px #10182a; white-space: nowrap; }
.dev span { display: inline-block; letter-spacing: 1.400px; }
.foot { display: flex; padding-top: 10px; height: 96px; }
.foot b { margin-left: 9px; width: 140px; font-size: 52px; line-height: 70px; color: #1d2b36; letter-spacing: -.3px; }
.gl { font-size: 53px; line-height: 70px; color: #4fa8cc; }
.name { margin-left: auto; font-size: 36px; line-height: 76px; color: #000; }
.fs { width: 76px; height: 76px; margin-left: 22px; background: #4fa9ce; display: flex; align-items: center; justify-content: center; }

/* dock */
.dock { position: absolute; left: 494px; top: 1662px; width: 1892px; height: 138px; padding-left: 8px; border-radius: 12px 12px 0 0; display: flex; background: linear-gradient(90deg, #5c5355, #62585a 35%, #5f5a62 43%, #60647a 55%, #6b7088 72%, #74718a 77%, #936b68 81%, #c17557 86%, #d97d58 92%, #cf7855); }
.app { width: 114px; height: 138px; }
.sep { width: 51px; height: 102px; margin-top: 18px; background: linear-gradient(90deg, transparent 26px, #804a3c 26px, #804a3c 28px, transparent 28px); }
.slack { font: 700 56px "Open Sans", sans-serif; fill: #14151a; }
.pages-t { font: 14px Inter, sans-serif; fill: #fff; }
.tiny { font: 5px Inter, sans-serif; fill: #555; }
.key { font: 700 5.500px Inter, sans-serif; fill: #222; }
.re { font: 700 12px "Liberation Serif", serif; fill: #222; }
```
